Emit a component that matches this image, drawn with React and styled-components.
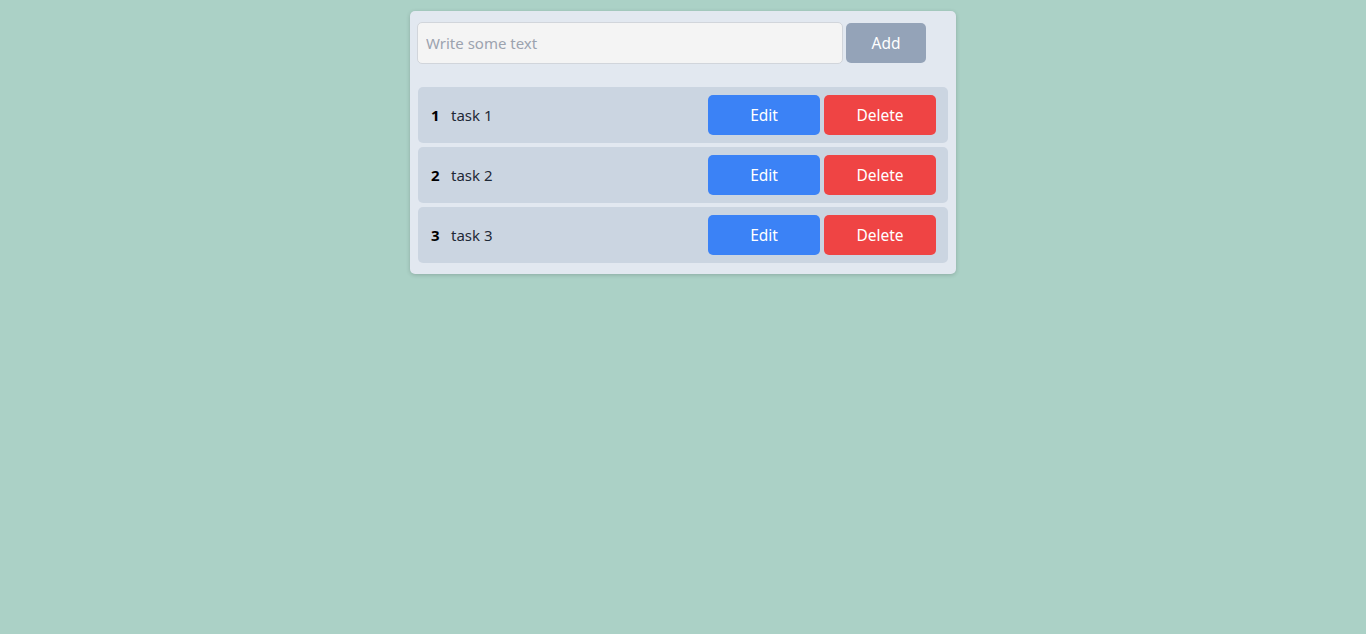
import React, { useState } from 'react'
import styled, { createGlobalStyle } from 'styled-components'

const GlobalStyle = createGlobalStyle`
  body {
    margin: 0;
    background: #abd1c6;
    font-family: 'Noto Sans', 'Open Sans', sans-serif;
  }
`

const Page = styled.div`
  min-height: 634px;
  display: flex;
  justify-content: center;
  align-items: flex-start;
  padding-top: 11px;
  box-sizing: border-box;
`

const Card = styled.div`
  width: 546px;
  box-sizing: border-box;
  background: #e2e8f0;
  border-radius: 5px;
  padding: 11px 8px 7px 8px;
  box-shadow: 0 1px 4px rgba(0, 0, 0, 0.18);
`

const Form = styled.div`
  display: flex;
  align-items: center;
  gap: 3px;
  margin-left: -1px;
  margin-bottom: 23px;
`

const Input = styled.input`
  width: 426px;
  height: 42px;
  box-sizing: border-box;
  background: #f4f4f4;
  border: 1px solid #d1d5db;
  border-radius: 5px;
  padding: 0 8px;
  font-family: inherit;
  font-size: 15px;
  color: #1f2937;
  outline: none;
  &::placeholder {
    color: #9ca3af;
  }
`

const Button = styled.button`
  width: ${p => p.$w || 112}px;
  height: 40px;
  border: none;
  border-radius: 5px;
  background: ${p => p.$bg};
  color: #fff;
  font-family: inherit;
  font-size: 15.5px;
  cursor: pointer;
`

const Row = styled.div`
  display: flex;
  align-items: center;
  height: 56px;
  box-sizing: border-box;
  background: #cbd5e1;
  border-radius: 5px;
  padding: 0 12px;
  margin-bottom: 4px;
`

const Num = styled.span`
  font-weight: 700;
  font-size: 15px;
  color: #000;
  width: 20px;
  margin-left: 1px;
`

const Text = styled.span`
  flex: 1;
  font-size: 15px;
  color: #1f2937;
`

const Actions = styled.div`
  display: flex;
  gap: 4px;
`

export default function App () {
  const [text, setText] = useState('')
  const tasks = ['task 1', 'task 2', 'task 3']
  return (
    <>
      <GlobalStyle />
      <Page>
        <Card>
          <Form>
            <Input
              placeholder='Write some text'
              value={text}
              onChange={e => setText(e.target.value)}
            />
            <Button $bg='#94a3b8' $w={80}>Add</Button>
          </Form>
          {tasks.map((t, i) => (
            <Row key={i}>
              <Num>{i + 1}</Num>
              <Text>{t}</Text>
              <Actions>
                <Button $bg='#3b82f6'>Edit</Button>
                <Button $bg='#ef4444'>Delete</Button>
              </Actions>
            </Row>
          ))}
        </Card>
      </Page>
    </>
  )
}
